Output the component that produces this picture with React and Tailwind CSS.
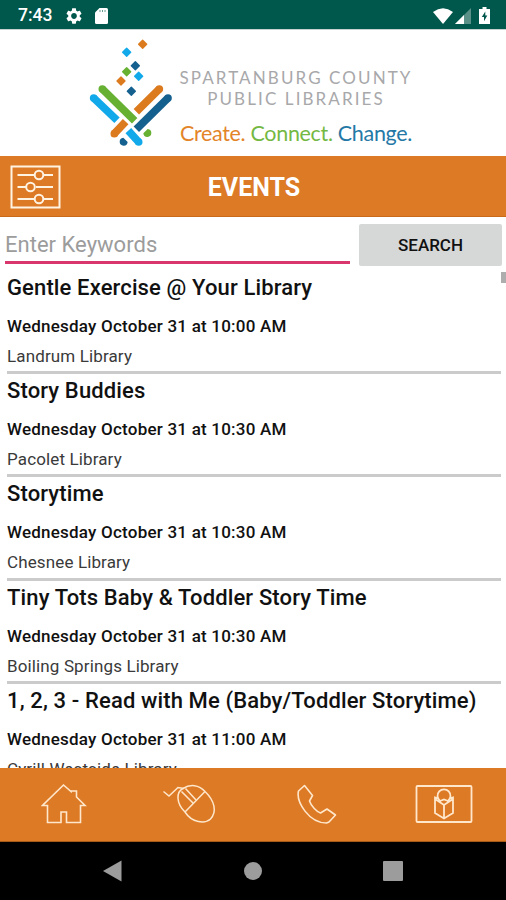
import React from "react";

const events = [
    { title: "Gentle Exercise @ Your Library", date: "Wednesday October 31 at 10:00 AM", place: "Landrum Library" },
    { title: "Story Buddies", date: "Wednesday October 31 at 10:30 AM", place: "Pacolet Library" },
    { title: "Storytime", date: "Wednesday October 31 at 10:30 AM", place: "Chesnee Library" },
    { title: "Tiny Tots Baby & Toddler Story Time", date: "Wednesday October 31 at 10:30 AM", place: "Boiling Springs Library" },
    { title: "1, 2, 3 - Read with Me (Baby/Toddler Storytime)", date: "Wednesday October 31 at 11:00 AM", place: "Cyrill Westside Library" },
];

const diamonds = [
    [188, 43, "#dc7a1e"],
    [140, 67, "#12a9ea"],
    [166, 107, "#14618f"],
    [140, 125, "#66b032"],
    [176, 139, "#12a9ea"],
    [123, 153, "#dc7a1e"],
    [154, 184, "#14618f"],
];

function StatusBar() {
    return (
        <div className="flex h-[29px] shrink-0 items-center bg-[#00574b] pt-[2px] text-white">
            <span className="ml-[18px] w-[48px] text-[17.5px] leading-none font-medium">7:43</span>
            <svg className="h-[16px] w-[16px]" viewBox="2 2 20 20" fill="currentColor">
                <path d="M19.14 12.94c.04-.3.06-.61.06-.94s-.02-.64-.07-.94l2.03-1.58c.18-.14.23-.41.12-.61l-1.92-3.32c-.12-.22-.37-.29-.59-.22l-2.39.96c-.5-.38-1.03-.7-1.62-.94l-.36-2.54c-.04-.24-.24-.41-.48-.41h-3.84c-.24 0-.43.17-.47.41l-.36 2.54c-.59.24-1.13.57-1.62.94l-2.39-.96c-.22-.08-.47 0-.59.22L2.74 8.87c-.12.21-.08.47.12.61l2.03 1.58c-.05.3-.09.63-.09.94s.02.64.07.94l-2.03 1.58c-.18.14-.23.41-.12.61l1.92 3.32c.12.22.37.29.59.22l2.39-.96c.5.38 1.03.7 1.62.94l.36 2.54c.05.24.24.41.48.41h3.84c.24 0 .44-.17.47-.41l.36-2.54c.59-.24 1.13-.56 1.62-.94l2.39.96c.22.08.47 0 .59-.22l1.92-3.32c.12-.22.07-.47-.12-.61l-2.01-1.58zM12 15.6c-1.98 0-3.6-1.62-3.6-3.6s1.62-3.6 3.6-3.6 3.6 1.62 3.6 3.6-1.62 3.6-3.6 3.6z" />
            </svg>
            <svg className="ml-[13px] h-[16px] w-[13px]" viewBox="0 0 13 16">
                <path d="M4.5 0H11.5Q13 0 13 1.5V14.5Q13 16 11.5 16H1.5Q0 16 0 14.5V4.5Z" fill="#fff" />
                <path d="M5 2V4M7.5 2V4M10 2V4" stroke="#00574b" strokeOpacity=".6" strokeWidth="1" />
            </svg>
            <div className="mr-[16px] ml-auto flex items-center">
                <svg className="h-[16px] w-[20px]" viewBox="0 0 20 16" fill="currentColor">
                    <path d="M0 4Q10 -3.4 20 4L10 16Z" />
                </svg>
                <svg className="ml-[2px] h-[16px] w-[16px]" viewBox="0 0 16 16">
                    <path d="M16 0V16H0Z" fill="#fff" fillOpacity=".35" />
                    <path d="M9 7V16H0Z" fill="#fff" />
                </svg>
                <svg className="ml-[8px] h-[17px] w-[11px]" viewBox="0 0 11 17">
                    <path d="M3.5 0H7.5V2H11V17H0V2H3.5Z" fill="#fff" />
                    <path d="M6.3 4.5L2.8 10H5V14.3L8.3 8.6H6.3Z" fill="#00574b" />
                </svg>
            </div>
        </div>
    );
}

function Logo() {
    return (
        <svg className="h-[125px] w-[110px] shrink-0" viewBox="0 0 330 375">
            {diamonds.map(([x, y, fill]) => (
                <rect key={x + "-" + y} x={x - 10.5} y={y - 10.5} width="21" height="21" rx="2" fill={fill} transform={`rotate(45 ${x} ${y})`} />
            ))}
            <g strokeWidth="23">
                <path d="M41 204L111 271M145 302L176 336" stroke="#12a9ea" />
                <path d="M67 177L164 272" stroke="#66b032" />
                <path d="M238 177L169 245M137 275L103 311" stroke="#dc7a1e" />
                <path d="M264 204L169 298" stroke="#14618f" />
            </g>
            <circle cx="41" cy="204" r="11.5" fill="#12a9ea" />
            <circle cx="176" cy="336" r="11.5" fill="#12a9ea" />
            <circle cx="67" cy="177" r="11.5" fill="#66b032" />
            <path d="M203 297A12 12 0 1 1 190 310Z" fill="#66b032" />
            <circle cx="238" cy="177" r="11.5" fill="#dc7a1e" />
            <circle cx="103" cy="311" r="11.5" fill="#dc7a1e" />
            <circle cx="264" cy="204" r="11.5" fill="#14618f" />
            <path d="M130 323A12 12 0 1 0 143 336Z" fill="#14618f" />
        </svg>
    );
}

function Header() {
    return (
        <div className="flex h-[127px] shrink-0 border-t border-[#c4d3d0] bg-white pl-[80px] font-[Lato,sans-serif]">
            <Logo />
            <div className="-ml-[11px] w-[234px] pt-[37px] text-[#a8a8aa] whitespace-nowrap">
                <div className="text-center text-[17px] leading-[21px] tracking-[2.1px]">SPARTANBURG COUNTY</div>
                <div className="text-center text-[17px] leading-[21px] tracking-[2.1px]">PUBLIC LIBRARIES</div>
                <div className="mt-[11px] ml-[1px] text-[21.5px] leading-[26px] tracking-[-0.33px]">
                    <span className="text-[#e38429]">Create.</span> <span className="text-[#74b843]">Connect.</span>{" "}
                    <span className="text-[#2478a6]">Change.</span>
                </div>
            </div>
        </div>
    );
}

function TitleBar() {
    return (
        <div className="grid h-[61px] shrink-0 grid-cols-[1fr_auto_1fr] items-center border-b border-[#c96a1a] bg-[#dd7a26] text-white">
            <svg className="mt-[2px] ml-[10px] h-[44px] w-[51px]" viewBox="0 0 51 44" fill="none" stroke="#fff3e2" strokeWidth="2">
                <rect x="1.5" y="1.5" width="48" height="41" />
                <path d="M7.5 10H24M34 10H43M7.5 22H16M26 22H43M7.5 34H24M34 34H43" />
                <circle cx="29" cy="10" r="4.3" />
                <circle cx="20.5" cy="22" r="4.3" />
                <circle cx="29" cy="34" r="4.3" />
            </svg>
            <h1 className="mt-[3px] ml-[2px] text-[25px] leading-none font-bold">EVENTS</h1>
        </div>
    );
}

function SearchBar() {
    return (
        <div className="flex h-[54px] shrink-0 items-start pr-[4px] pl-[5px]">
            <input
                type="text"
                className="mt-[7px] h-[40px] w-[345px] border-b-[3px] border-[#d8366c] pt-[3px] text-[22px] tracking-[0.02px] outline-none placeholder:text-[#9c9c9c]"
                placeholder="Enter Keywords"
            />
            <button className="mt-[7px] ml-auto h-[42px] w-[143px] rounded-[2px] bg-[#d6d7d7] pt-[1px] text-[17px] text-[#111] font-medium">
                SEARCH
            </button>
        </div>
    );
}

function EventItem({ event }) {
    return (
        <li className="h-[103.2px] pt-[3px] pr-[5px] pl-[7px] whitespace-nowrap">
            <div className="flex h-[100.2px] flex-col border-b-[3px] border-[#cacbca] text-[#111]">
                <h2 className="text-[22px] leading-[28px] font-medium tracking-[0.13px]">{event.title}</h2>
                <p className="mt-[13px] text-[17px] leading-[22px] font-medium tracking-[0.22px]">{event.date}</p>
                <p className="mt-[8px] text-[17px] leading-[22px] tracking-[0.13px] text-[#3a3a3a]">{event.place}</p>
            </div>
        </li>
    );
}

function TabBar() {
    return (
        <nav className="flex h-[74px] shrink-0 items-start border-b border-[#a85a18] bg-[#dd7a26]">
            <svg className="mt-[15px] ml-[41px] h-[44px] w-[46px]" viewBox="0 0 46 44" fill="none" stroke="#ffe7cb" strokeWidth="1.6">
                <path d="M22.5 2L1.5 22.5H6.5V39.5H20V29H25.500V39.5H39.5V22.5H44L35.5 14V8H30V8.5Z" />
            </svg>
            <svg className="mt-[15px] ml-[75px] h-[44px] w-[56px]" viewBox="0 0 56 44" fill="none" stroke="#ffe7cb" strokeWidth="1.5">
                <path d="M1.5 8.5L7 13L16 4.5L22 5.5" />
                <path d="M23 29C14 20 14 9 21 5.5C28 1 37 1.5 43 8.5M23 29C30 40 43 41 48.500 36C55 29 53 18 43 8.5M23 29L43 8.5" />
                <path d="M19.5 8.5L31.5 20.5M23.5 5.5L34 17" />
            </svg>
            <svg className="mt-[16px] ml-[78px] h-[42px] w-[42px]" viewBox="0 0 42 42" fill="none" stroke="#ffe7cb" strokeWidth="1.6" strokeLinejoin="round">
                <path d="M8.5 1.5L2.5 7C0 18 13 39 30.5 39L33 38L39.5 31L31 25L24.5 29C21 28 15 22 13.5 17L16.5 11.5Z" />
            </svg>
            <svg className="mt-[16px] ml-[77px] h-[40px] w-[58px]" viewBox="0 0 58 40" fill="none" stroke="#ffe7cb" strokeWidth="1.8">
                <rect x="1.5" y="2" width="55" height="36" rx="1" />
                <path d="M25 17A6.5 6.500 0 1 1 33 17M25 17L29 15.5L33 17M24 14.5L20 13.5V29L29 34.5L38 29V13.5L34 14.5M20 15L29 21L38 15M29 21V34.5" />
            </svg>
        </nav>
    );
}

function SystemBar() {
    return (
        <div className="flex h-[58px] shrink-0 items-center bg-black text-[#9c9c9c]">
            <svg className="ml-[102px] h-[22px] w-[20px]" viewBox="0 0 20 22" fill="currentColor">
                <path d="M19.5 .5V21.500L1 11Z" />
            </svg>
            <div className="ml-[122px] h-[18px] w-[18px] rounded-full bg-[#9c9c9c]" />
            <div className="ml-[121px] h-[20px] w-[20px] rounded-[1px] bg-[#9c9c9c]" />
        </div>
    );
}

export default function App() {
    return (
        <div className="flex h-[900px] w-[506px] flex-col overflow-hidden bg-white font-[Roboto,sans-serif]">
            <StatusBar />
            <Header />
            <TitleBar />
            <SearchBar />
            <div className="relative min-h-0 flex-1 overflow-hidden">
                <ul>
                    {events.map((event) => (
                        <EventItem key={event.title} event={event} />
                    ))}
                </ul>
                <div className="absolute top-[1px] right-0 h-[11px] w-[5px] bg-[#adadad]" />
            </div>
            <TabBar />
            <SystemBar />
        </div>
    );
}
